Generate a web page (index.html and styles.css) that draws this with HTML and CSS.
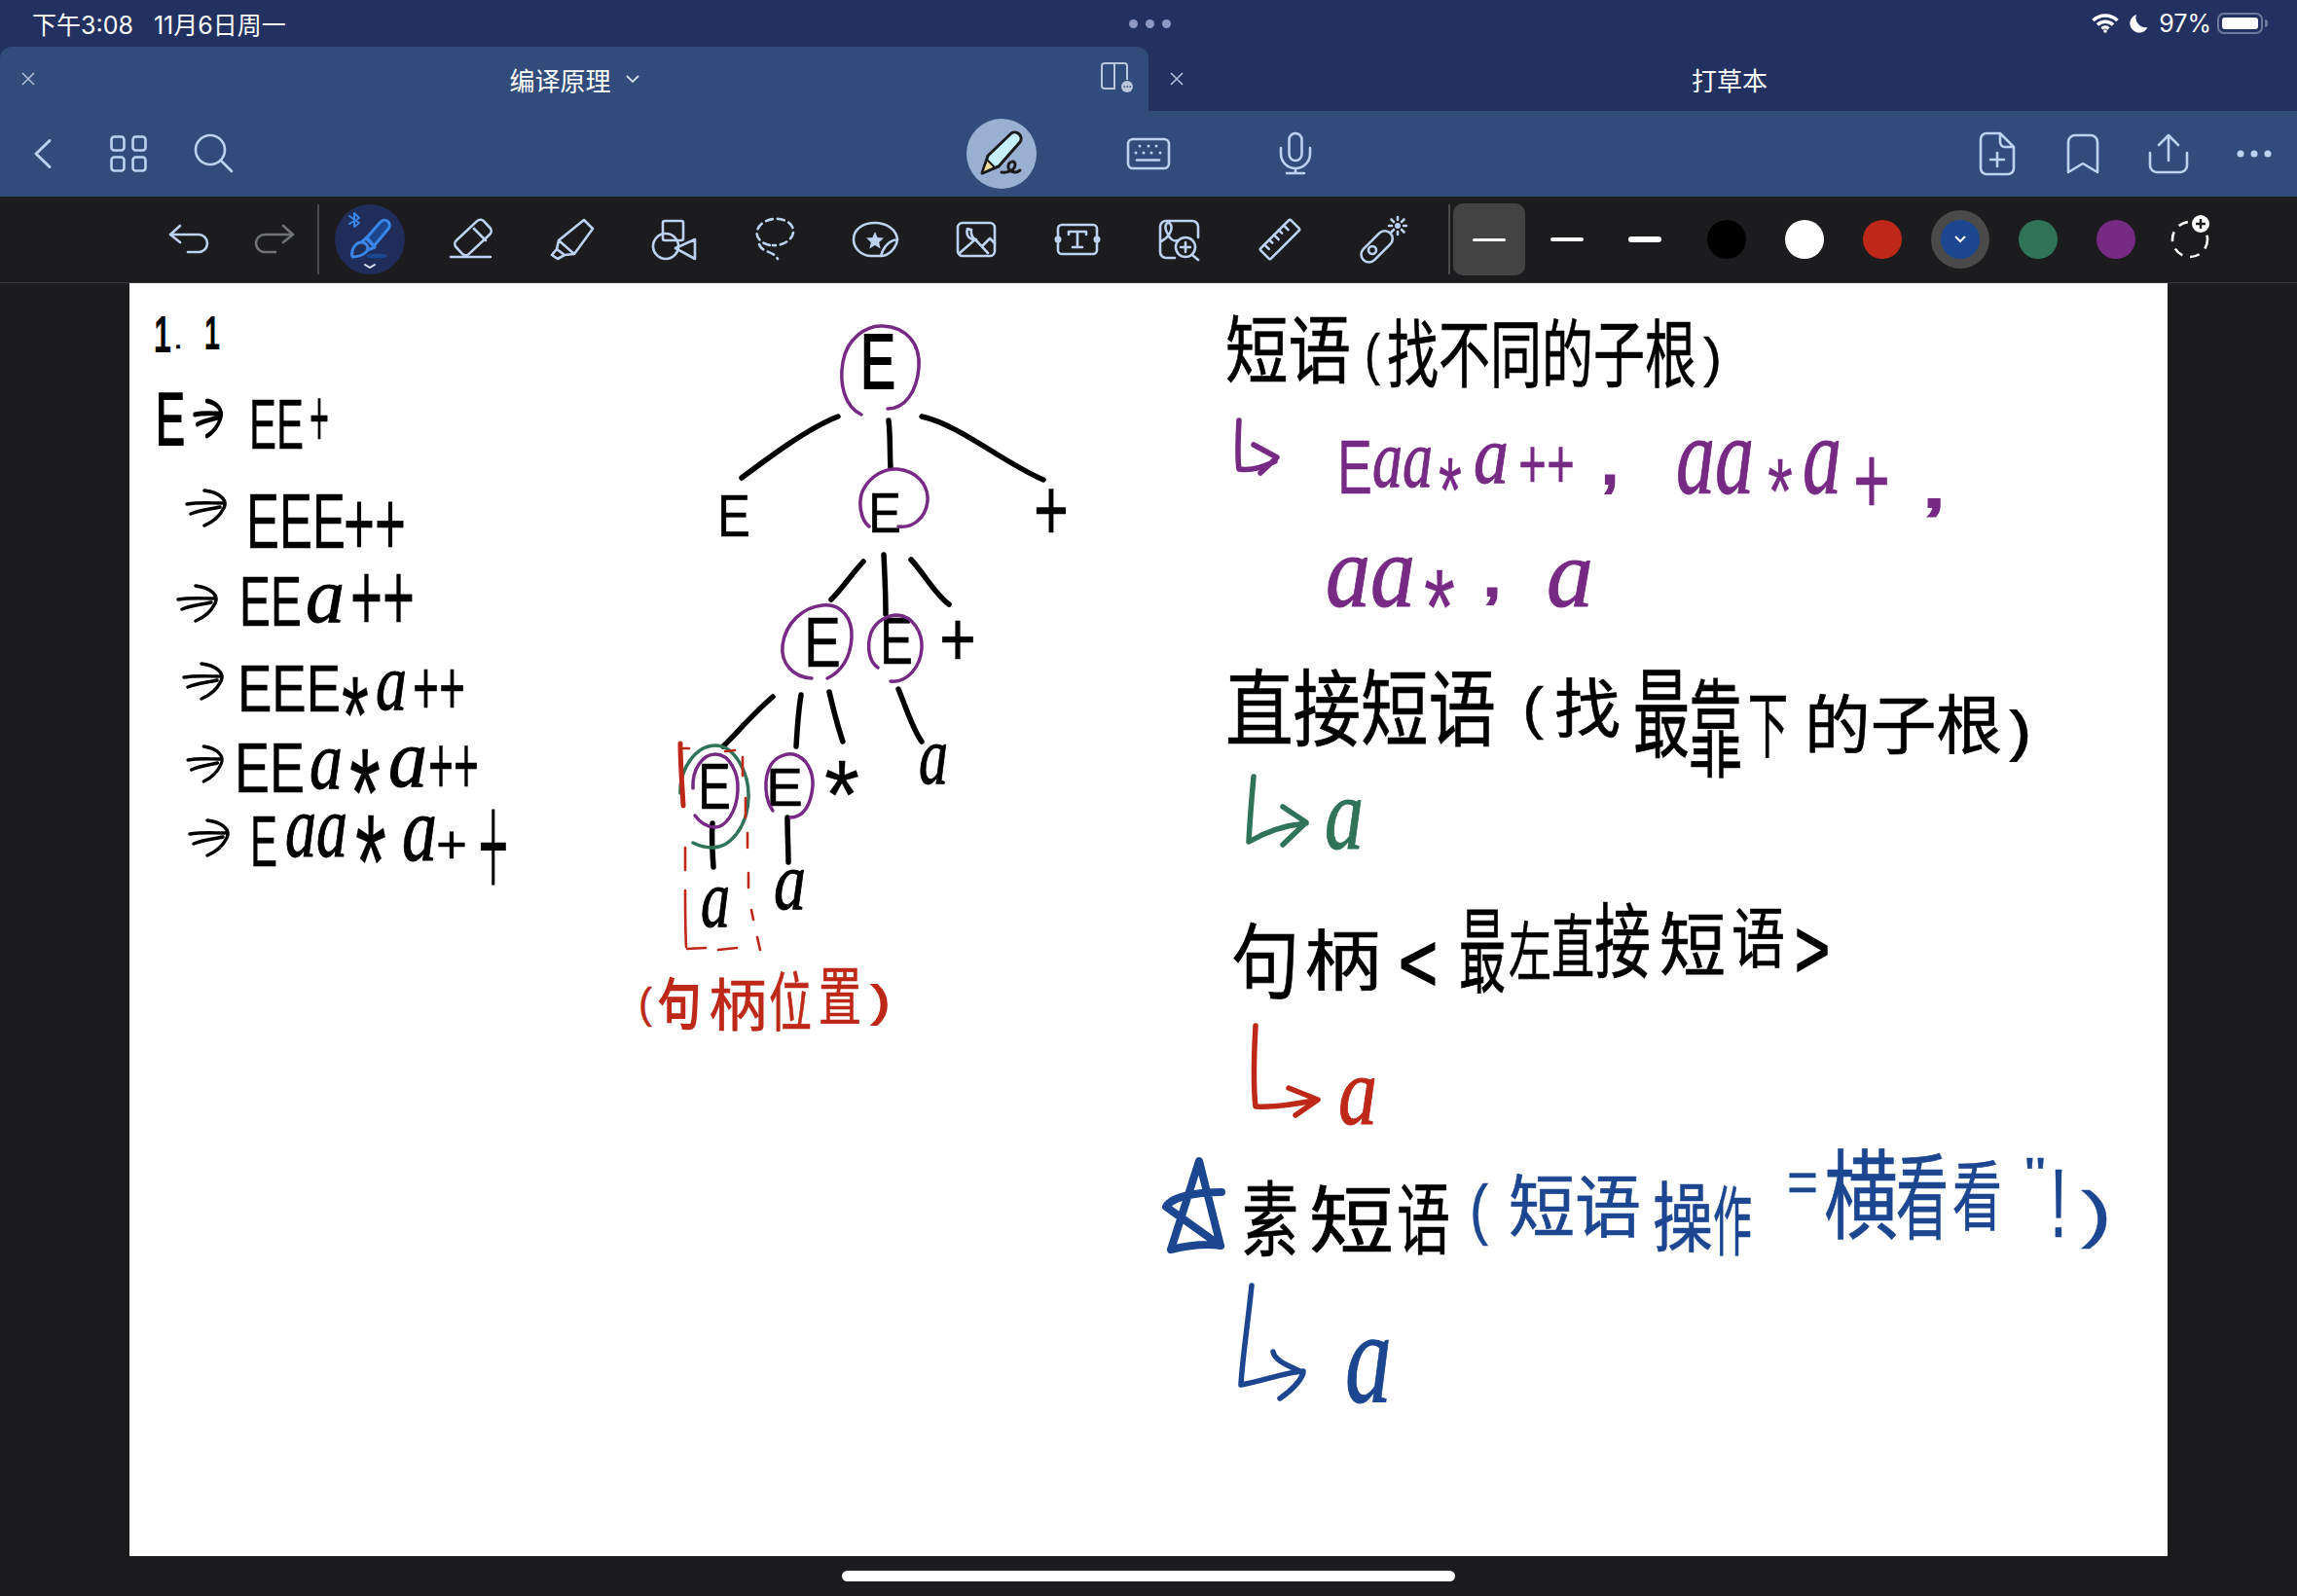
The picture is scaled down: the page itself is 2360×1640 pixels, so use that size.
FILE: index.html
```html
<!DOCTYPE html>
<html lang="zh-CN">
<head>
    <title>编译原理</title>
    <link rel="stylesheet" href="styles.css">
</head>
<body>
    <!-- status bar -->
    <div class="status">
        <div class="status-time"><span>下午3:08</span><span>11月6日周一</span></div>
        <div class="status-dots"><i></i><i></i><i></i></div>
        <div class="status-right">
            <svg class="wifi" viewBox="0 0 28 20"><path d="M1.5 7A18 18 0 0 1 26.500 7M6 11.500A11.500 11.500 0 0 1 22 11.500M10.500 15.500A5 5 0 0 1 17.500 15.500"/><circle cx="14" cy="18" r="1.800"/></svg>
            <svg class="moon" viewBox="0 0 20 20"><path d="M8 1A9.500 9.500 0 1 0 19.500 14A10 10 0 0 1 8 1Z"/></svg>
            <span class="battery-text">97%</span>
            <div class="battery"><div class="battery-fill"></div></div>
            <div class="battery-nub"></div>
        </div>
    </div>

    <!-- tabs -->
    <div class="tabs">
        <div class="tab active">
            <div class="tab-side"><svg class="tab-close" viewBox="0 0 14 14"><path d="M1 1L13 13M13 1L1 13"/></svg></div>
            <div class="tab-title">编译原理<svg class="tab-chevron" viewBox="0 0 14 8"><path d="M1 1L7 7L13 1"/></svg></div>
            <div class="tab-side">
                <svg class="split" viewBox="0 0 36 34"><path d="M16 27H5a3 3 0 0 1-3-3V4a3 3 0 0 1 3-3H25a3 3 0 0 1 3 3V18M15 1V27"/><circle class="split-badge" cx="28" cy="25" r="6"/><path class="split-dots" d="M25 25H25.500M28 25H28.500M31 25H31.500"/></svg>
            </div>
        </div>
        <div class="tab">
            <div class="tab-side"><svg class="tab-close" viewBox="0 0 14 14"><path d="M1 1L13 13M13 1L1 13"/></svg></div>
            <div class="tab-title second">打草本</div>
            <div class="tab-side"></div>
        </div>
    </div>

    <!-- navigation icons -->
    <div class="nav">
        <div class="nav-group">
            <div class="cell"><svg class="icon thick" viewBox="0 0 48 48"><path d="M31 10.500L17 24L31 37.500"/></svg></div>
            <div class="cell"><svg class="icon" viewBox="0 0 48 48"><rect x="6.500" y="6.500" width="13" height="14" rx="3"/><rect x="28.500" y="6.500" width="13" height="14" rx="3"/><rect x="6.500" y="27.500" width="13" height="14" rx="3"/><rect x="28.500" y="27.500" width="13" height="14" rx="3"/></svg></div>
            <div class="cell"><svg class="icon" viewBox="0 0 48 48"><circle cx="20" cy="20" r="15"/><path d="M31 31L42 42"/></svg></div>
        </div>
        <div class="nav-group center">
            <div class="cell wide">
                <div class="pencil-btn">
                    <svg class="pencil" viewBox="0 0 72 72">
                        <path class="pencil-body" d="M16 56L22 38L46 15a6.500 6.500 0 0 1 9 9L33 49Z"/>
                        <path class="pencil-tip" d="M16 56L21 42L29 50Z"/>
                        <path class="pencil-line" d="M36 55C44 56 50 52 50 47C50 43 44 43 43 48C42 54 50 57 55 53"/>
                    </svg>
                </div>
            </div>
            <div class="cell wide"><svg class="icon" viewBox="0 0 48 48"><rect x="3" y="9" width="42" height="30" rx="5"/><path d="M12 30.500H35"/><g class="icon-dots"><circle cx="15" cy="16" r="1.500"/><circle cx="24" cy="16" r="1.500"/><circle cx="32" cy="16" r="1.500"/><circle cx="11" cy="23" r="1.500"/><circle cx="19" cy="23" r="1.500"/><circle cx="27" cy="23" r="1.500"/><circle cx="36" cy="23" r="1.500"/></g></svg></div>
            <div class="cell wide"><svg class="icon" viewBox="0 0 48 48"><rect x="17.500" y="3" width="13" height="28" rx="6.500"/><path d="M9 18V24a15 15 0 0 0 30 0V18M24 39V44M15 44H33"/></svg></div>
        </div>
        <div class="nav-group right">
            <div class="cell"><svg class="icon" viewBox="0 0 48 48"><path d="M27 3H13a6 6 0 0 0-6 6V39a6 6 0 0 0 6 6H35a6 6 0 0 0 6-6V17ZM27 3V12a5 5 0 0 0 5 5H41M24 23V37M17 30H31"/></svg></div>
            <div class="cell"><svg class="icon" viewBox="0 0 48 48"><path d="M9 43V12a7 7 0 0 1 7-7H32a7 7 0 0 1 7 7V43L24 34Z"/></svg></div>
            <div class="cell"><svg class="icon" viewBox="0 0 48 48"><path d="M24 5V31M14 15L24 5L34 15M5 23V36a7 7 0 0 0 7 7H36a7 7 0 0 0 7-7V23"/></svg></div>
            <div class="cell"><svg class="icon" viewBox="0 0 48 48"><g class="icon-dots"><circle cx="10" cy="24" r="3.500"/><circle cx="24" cy="24" r="3.500"/><circle cx="38" cy="24" r="3.500"/></g></svg></div>
        </div>
    </div>

    <!-- drawing tools -->
    <div class="tools">
        <div class="tool-edit"><svg class="icon" viewBox="0 0 48 48"><path d="M15 10L5 19L15 27M5 19H34a9 9 0 0 1 0 18H23"/></svg></div>
        <div class="tool-edit dim"><svg class="icon" viewBox="0 0 48 48"><path d="M33 10L43 19L33 27M43 19H14a9 9 0 0 0 0 18H25"/></svg></div>
        <div class="divider"></div>

        <div class="tool">
            <div class="pen-btn">
                <svg class="pen" viewBox="0 0 72 72">
                    <path class="pen-handle" d="M32 35L47 18a5 5 0 0 1 8 7L40 43Z"/>
                    <path class="pen-outline" d="M27 39L33 34L41 44L34 47M18 54C16 46 22 39 27 39C33 39 36 45 32 49C28 53 23 54 18 54Z"/>
                    <path class="pen-outline thin" d="M15 12L25 19L20 23V9L25 14L15 20"/>
                    <ellipse class="pen-blob" cx="43" cy="53" rx="11" ry="2.500"/>
                    <path class="pen-chevron" d="M31 62L36 65L41 62"/>
                </svg>
            </div>
        </div>
        <div class="tool"><svg class="icon" viewBox="0 0 48 48"><rect x="6.500" y="12.500" width="39" height="19" rx="5" transform="rotate(-43 26 22)"/><path d="M27 13L39 25M3 42H44"/></svg></div>
        <div class="tool"><svg class="icon" viewBox="0 0 48 48"><path d="M36 4L45 13L26 39L10 25ZM10 25L8 34L3 40L9 44L16 40L26 39M8 34L16 40"/></svg></div>
        <div class="tool"><svg class="icon" viewBox="0 0 48 48"><rect x="13" y="5" width="21" height="20" rx="2"/><circle cx="16" cy="31" r="13"/><path d="M46 24V44L26 33Z"/></svg></div>
        <div class="tool"><svg class="icon dashed" viewBox="0 0 48 48"><path d="M19 30C10 28 4 22 6 15C8 7 18 2 28 3C38 4 44 10 43 17C42 24 33 31 22 30"/><path d="M8 29C11 38 22 35 27 44"/></svg></div>
        <div class="tool"><svg class="icon" viewBox="0 0 48 48"><path d="M30 41H20C10 41 2 33 2 24C2 14 11 7 24 7C36 7 46 14 47 24C38 25 32 33 30 41C38 41 46 33 47 24"/><polygon class="icon-solid" points="24,16 26.600,22 33,22.600 28.200,27 29.600,33.500 24,30 18.400,33.500 19.800,27 15,22.600 21.400,22"/></svg></div>
        <div class="tool"><svg class="icon" viewBox="0 0 48 48"><rect x="5" y="7" width="38" height="34" rx="5"/><path d="M7 38L23 24L36 38M30 31L38 23L43 28M15 13C13 20 17 25 24 24C21 24 18 19 19 14Z"/></svg></div>
        <div class="tool"><svg class="icon" viewBox="0 0 48 48"><rect x="4" y="9" width="40" height="30" rx="4"/><path d="M15 19V16H33V19M24 16V32M19 32H29"/><g class="icon-solid"><circle cx="4" cy="24" r="3.500"/><circle cx="44" cy="24" r="3.500"/></g></svg></div>
        <div class="tool"><svg class="icon" viewBox="0 0 48 48"><path d="M20 43H11a6 6 0 0 1-6-6V11a6 6 0 0 1 6-6H38a6 6 0 0 1 6 6V22M6 26C14 22 18 14 16 9C13 4 8 9 12 17C14 22 18 27 23 25"/><circle cx="31" cy="32" r="10"/><path d="M38 40L44 45M31 27V37M26 32H36"/></svg></div>
        <div class="tool"><svg class="icon" viewBox="0 0 48 48"><g transform="rotate(-45 24 24)"><rect x="2" y="16.500" width="44" height="15" rx="2"/><path d="M9 16.500V23M16 16.500V21M23 16.500V23M30 16.500V21M37 16.500V23"/></g></svg></div>
        <div class="tool"><svg class="icon" viewBox="0 0 48 48"><rect x="0" y="23" width="39" height="16" rx="8" transform="rotate(-45 20 31)"/><circle cx="15" cy="35" r="4"/><circle class="icon-solid" cx="41" cy="10" r="3"/><path d="M41 1V4M41 16V19M32 10H35M47 10H50M34.500 3.500L37 6M45 14L47.500 16.500M34.500 16.500L37 14M45 6L47.500 3.500"/></svg></div>

        <div class="divider second"></div>
        <div class="swatch"><div class="size-tile"><div class="size-line s1"></div></div></div>
        <div class="swatch"><div class="size-line s2"></div></div>
        <div class="swatch"><div class="size-line s3"></div></div>
        <div class="swatch first-color"><div class="dot black"></div></div>
        <div class="swatch"><div class="dot white"></div></div>
        <div class="swatch"><div class="dot red"></div></div>
        <div class="swatch"><div class="dot blue"><svg class="dot-chevron" viewBox="0 0 12 8"><path d="M1 1L6 6L11 1"/></svg></div></div>
        <div class="swatch"><div class="dot green"></div></div>
        <div class="swatch"><div class="dot purple"></div></div>
        <div class="add-color">
            <svg class="add-icon" viewBox="0 0 48 48">
                <circle class="add-ring" cx="24" cy="24" r="18"/>
                <circle class="add-badge" cx="35" cy="8" r="9"/>
                <path class="add-plus" d="M35 3V13M30 8H40"/>
            </svg>
        </div>
    </div>

    <!-- the page with the notes -->
    <div class="workspace">
        <svg class="notes" viewBox="133 291 2094 1308">
            <defs>
                <path id="arrow" d="M0 14C12 12 24 13 36 13M4 24C14 20 26 19 34 17M18 0C34 2 42 10 38 18C34 26 28 32 18 36"/>
            </defs>

            <!-- derivation -->
            <g class="ink-black">
                <text class="cap bold" x="158" y="361" font-size="50" textLength="18" lengthAdjust="spacingAndGlyphs">1</text>
                <text class="cap" x="178" y="358" font-size="30" textLength="10" lengthAdjust="spacingAndGlyphs">.</text>
                <text class="cap bold" x="210" y="358" font-size="46" textLength="16" lengthAdjust="spacingAndGlyphs">1</text>

                <text class="cap bold" x="160" y="457" font-size="76" textLength="30" lengthAdjust="spacingAndGlyphs">E</text>
                <use class="stroke thick" href="#arrow" transform="translate(200 412) scale(.7 1)"/>
                <text class="cap" x="256" y="461" font-size="72" textLength="56" lengthAdjust="spacingAndGlyphs">EE</text>
                <text class="cap" x="318" y="459" font-size="85" textLength="20" lengthAdjust="spacingAndGlyphs">+</text>

                <use class="stroke" href="#arrow" transform="translate(192 504)"/>
                <text class="cap" x="253" y="563" font-size="80" textLength="102" lengthAdjust="spacingAndGlyphs">EEE</text>
                <text class="cap" x="353" y="570" font-size="95" textLength="64" lengthAdjust="spacingAndGlyphs">++</text>

                <use class="stroke" href="#arrow" transform="translate(183 602)"/>
                <text class="cap" x="246" y="643" font-size="72" textLength="64" lengthAdjust="spacingAndGlyphs">EE</text>
                <text class="hand" x="314" y="639" font-size="80" textLength="40" lengthAdjust="spacingAndGlyphs">a</text>
                <text class="cap" x="360" y="648" font-size="100" textLength="66" lengthAdjust="spacingAndGlyphs">++</text>

                <use class="stroke" href="#arrow" transform="translate(189 682)"/>
                <text class="cap" x="244" y="731" font-size="68" textLength="106" lengthAdjust="spacingAndGlyphs">EEE</text>
                <text class="cap" x="351" y="774" font-size="114" textLength="28" lengthAdjust="spacingAndGlyphs">*</text>
                <text class="hand" x="386" y="729" font-size="82" textLength="32" lengthAdjust="spacingAndGlyphs">a</text>
                <text class="cap" x="424" y="734" font-size="80" textLength="54" lengthAdjust="spacingAndGlyphs">++</text>

                <use class="stroke" href="#arrow" transform="translate(193 767) scale(.9 1)"/>
                <text class="cap" x="241" y="814" font-size="72" textLength="72" lengthAdjust="spacingAndGlyphs">EE</text>
                <text class="hand" x="318" y="810" font-size="85" textLength="34" lengthAdjust="spacingAndGlyphs">a</text>
                <text class="cap" x="359" y="860" font-size="130" textLength="32" lengthAdjust="spacingAndGlyphs">*</text>
                <text class="hand" x="399" y="808" font-size="85" textLength="40" lengthAdjust="spacingAndGlyphs">a</text>
                <text class="cap" x="440" y="816" font-size="85" textLength="52" lengthAdjust="spacingAndGlyphs">++</text>

                <use class="stroke" href="#arrow" transform="translate(195 843)"/>
                <text class="cap" x="257" y="890" font-size="74" textLength="28" lengthAdjust="spacingAndGlyphs">E</text>
                <text class="hand" x="293" y="880" font-size="90" textLength="64" lengthAdjust="spacingAndGlyphs">aa</text>
                <text class="cap" x="365" y="934" font-size="140" textLength="32" lengthAdjust="spacingAndGlyphs">*</text>
                <text class="hand" x="413" y="884" font-size="95" textLength="36" lengthAdjust="spacingAndGlyphs">a</text>
                <text class="cap" x="448" y="887" font-size="55" textLength="32" lengthAdjust="spacingAndGlyphs">+</text>
                <text class="light" x="492" y="920" font-size="150" textLength="30" lengthAdjust="spacingAndGlyphs">+</text>
            </g>

            <!-- parse tree -->
            <g class="stroke ink-black wide">
                <path d="M861 428C830 440 790 470 762 491"/>
                <path d="M913 432C915 450 914 465 915 481"/>
                <path d="M947 428C985 436 1030 475 1072 493"/>
                <path d="M887 577C875 590 865 605 854 616"/>
                <path d="M908 570C909 590 910 610 910 631"/>
                <path d="M936 575C950 590 960 610 975 621"/>
                <path d="M794 716C775 732 760 750 743 767"/>
                <path d="M823 714C820 732 819 750 818 767"/>
                <path d="M852 711C856 728 860 745 866 762"/>
                <path d="M923 708C930 725 938 750 947 762"/>
                <path d="M732 846C731 860 732 878 733 891"/>
                <path d="M809 840C809 858 810 872 810 886"/>
            </g>
            <g class="ink-black">
                <text class="cap bold" x="884" y="399" font-size="80" textLength="36" lengthAdjust="spacingAndGlyphs">E</text>
                <text class="cap" x="737" y="551" font-size="62" textLength="34" lengthAdjust="spacingAndGlyphs">E</text>
                <text class="cap" x="892" y="547" font-size="58" textLength="34" lengthAdjust="spacingAndGlyphs">E</text>
                <text class="cap" x="1062" y="555" font-size="90" textLength="36" lengthAdjust="spacingAndGlyphs">+</text>
                <text class="cap" x="826" y="685" font-size="72" textLength="38" lengthAdjust="spacingAndGlyphs">E</text>
                <text class="cap" x="904" y="682" font-size="68" textLength="34" lengthAdjust="spacingAndGlyphs">E</text>
                <text class="cap" x="965" y="684" font-size="80" textLength="38" lengthAdjust="spacingAndGlyphs">+</text>
                <text class="cap" x="717" y="831" font-size="66" textLength="34" lengthAdjust="spacingAndGlyphs">E</text>
                <text class="cap" x="787" y="828" font-size="56" textLength="38" lengthAdjust="spacingAndGlyphs">E</text>
                <text class="cap" x="847" y="851" font-size="100" textLength="36" lengthAdjust="spacingAndGlyphs">*</text>
                <text class="hand" x="944" y="805" font-size="85" textLength="30" lengthAdjust="spacingAndGlyphs">a</text>
                <text class="hand" x="720" y="952" font-size="85" textLength="30" lengthAdjust="spacingAndGlyphs">a</text>
                <text class="hand" x="795" y="934" font-size="85" textLength="33" lengthAdjust="spacingAndGlyphs">a</text>
            </g>
            <g class="stroke ink-purple">
                <path d="M885 426C868 418 862 395 866 372C870 348 890 334 907 335C930 336 946 352 944 378C942 402 930 420 912 420"/>
                <path d="M893 541C884 534 881 515 887 503C895 488 910 481 922 482C942 484 954 498 953 515C951 533 937 543 923 541"/>
                <path d="M834 697C815 696 802 682 804 663C807 640 825 624 845 622C865 620 876 636 875 655C874 675 865 690 850 697"/>
                <path d="M902 686C893 680 890 665 895 650C900 638 912 632 922 632C938 633 948 650 947 666C946 685 932 702 915 700"/>
                <path d="M712 810C711 790 722 775 735 775C750 775 759 795 758 812C757 835 745 850 735 850C727 850 719 845 714 838"/>
                <path d="M794 833C786 822 784 800 792 786C798 777 808 774 815 775C828 778 836 792 835 808C833 828 825 840 812 840"/>
            </g>
            <path class="stroke ink-green" d="M699 815C698 790 715 766 735 766C755 766 770 795 769 820C768 850 750 871 732 871C722 871 716 868 712 866"/>
            <g class="stroke ink-red dash">
                <path class="thick" d="M699 764C699 785 701 808 702 828"/>
                <path d="M704 871V894M704 915C704 935 704 955 705 973M706 975L725 974M738 976L757 974"/>
                <path d="M702 769H708M745 772L755 771M763 778V797M766 820V840M768 856V871M769 897V912M772 935L774 945M778 963L781 976"/>
            </g>
            <g class="ink-red">
                <text class="cap" x="656" y="1046" font-size="44" textLength="14" lengthAdjust="spacingAndGlyphs">(</text>
                <text class="zh bold" x="676" y="1052" font-size="56" textLength="44" lengthAdjust="spacingAndGlyphs">句</text>
                <text class="zh" x="728" y="1054" font-size="58" textLength="60" lengthAdjust="spacingAndGlyphs">柄</text>
                <text class="zh" x="790" y="1054" font-size="66" textLength="44" lengthAdjust="spacingAndGlyphs">位</text>
                <text class="zh" x="841" y="1048" font-size="66" textLength="44" lengthAdjust="spacingAndGlyphs">置</text>
                <text class="cap bold" x="896" y="1044" font-size="44" textLength="18" lengthAdjust="spacingAndGlyphs">)</text>
            </g>

            <!-- 短语 -->
            <g class="ink-black">
                <text class="zh" x="1259" y="388" font-size="76" textLength="129" lengthAdjust="spacingAndGlyphs">短语</text>
                <text class="cap" x="1402" y="384" font-size="58" textLength="16" lengthAdjust="spacingAndGlyphs">(</text>
                <text class="zh" x="1425" y="392" font-size="76" textLength="318" lengthAdjust="spacingAndGlyphs">找不同的子根</text>
                <text class="cap" x="1750" y="386" font-size="56" textLength="19" lengthAdjust="spacingAndGlyphs">)</text>
            </g>
            <g class="ink-purple">
                <path class="stroke wide" d="M1273 432C1272 450 1271 470 1273 482C1285 484 1298 480 1310 474M1288 457L1312 470L1295 486"/>
                <text class="cap" x="1374" y="507" font-size="78" textLength="36" lengthAdjust="spacingAndGlyphs">E</text>
                <text class="hand" x="1410" y="500" font-size="85" textLength="62" lengthAdjust="spacingAndGlyphs">aa</text>
                <text class="cap" x="1478" y="536" font-size="95" textLength="24" lengthAdjust="spacingAndGlyphs">*</text>
                <text class="hand" x="1514" y="496" font-size="85" textLength="36" lengthAdjust="spacingAndGlyphs">a</text>
                <text class="cap" x="1560" y="501" font-size="72" textLength="58" lengthAdjust="spacingAndGlyphs">++</text>
                <text class="cap bold" x="1642" y="497" font-size="80" textLength="24" lengthAdjust="spacingAndGlyphs">,</text>
                <text class="hand" x="1722" y="507" font-size="115" textLength="80" lengthAdjust="spacingAndGlyphs">aa</text>
                <text class="cap" x="1816" y="537" font-size="95" textLength="26" lengthAdjust="spacingAndGlyphs">*</text>
                <text class="hand" x="1852" y="507" font-size="115" textLength="40" lengthAdjust="spacingAndGlyphs">a</text>
                <text class="cap" x="1904" y="528" font-size="100" textLength="38" lengthAdjust="spacingAndGlyphs">+</text>
                <text class="cap bold" x="1972" y="521" font-size="75" textLength="30" lengthAdjust="spacingAndGlyphs">,</text>
                <text class="hand" x="1362" y="623" font-size="105" textLength="92" lengthAdjust="spacingAndGlyphs">aa</text>
                <text class="cap" x="1463" y="661" font-size="110" textLength="32" lengthAdjust="spacingAndGlyphs">*</text>
                <text class="cap bold" x="1521" y="612" font-size="70" textLength="24" lengthAdjust="spacingAndGlyphs">,</text>
                <text class="hand" x="1589" y="623" font-size="100" textLength="48" lengthAdjust="spacingAndGlyphs">a</text>
            </g>

            <!-- 直接短语 -->
            <g class="ink-black">
                <text class="zh" x="1259" y="760" font-size="86" textLength="278" lengthAdjust="spacingAndGlyphs">直接短语</text>
                <text class="cap" x="1564" y="748" font-size="60" textLength="22" lengthAdjust="spacingAndGlyphs">(</text>
                <text class="zh" x="1597" y="752" font-size="66" textLength="68" lengthAdjust="spacingAndGlyphs">找</text>
                <text class="zh" x="1678" y="770" font-size="100" textLength="58" lengthAdjust="spacingAndGlyphs">最</text>
                <text class="zh" x="1735" y="790" font-size="110" textLength="55" lengthAdjust="spacingAndGlyphs">靠</text>
                <text class="zh" x="1796" y="772" font-size="74" textLength="41" lengthAdjust="spacingAndGlyphs">下</text>
                <text class="zh" x="1854" y="769" font-size="66" textLength="203" lengthAdjust="spacingAndGlyphs">的子根</text>
                <text class="cap bold" x="2066" y="770" font-size="56" textLength="20" lengthAdjust="spacingAndGlyphs">)</text>
            </g>
            <g class="ink-green">
                <path class="stroke wide" d="M1288 798C1286 820 1284 845 1283 865C1300 855 1320 848 1342 846M1318 829L1342 845L1318 868"/>
                <text class="hand" x="1361" y="872" font-size="105" textLength="40" lengthAdjust="spacingAndGlyphs">a</text>
            </g>

            <!-- 句柄 -->
            <g class="ink-black">
                <text class="zh" x="1265" y="1019" font-size="84" textLength="70" lengthAdjust="spacingAndGlyphs">句</text>
                <text class="zh" x="1340" y="1012" font-size="68" textLength="79" lengthAdjust="spacingAndGlyphs">柄</text>
                <text class="cap bold" x="1437" y="1018" font-size="84" textLength="40" lengthAdjust="spacingAndGlyphs">&lt;</text>
                <text class="zh" x="1499" y="1012" font-size="96" textLength="48" lengthAdjust="spacingAndGlyphs">最</text>
                <text class="zh" x="1550" y="1002" font-size="66" textLength="44" lengthAdjust="spacingAndGlyphs">左</text>
                <text class="zh" x="1594" y="999" font-size="72" textLength="44" lengthAdjust="spacingAndGlyphs">直</text>
                <text class="zh" x="1638" y="998" font-size="84" textLength="58" lengthAdjust="spacingAndGlyphs">接</text>
                <text class="zh" x="1705" y="997" font-size="72" textLength="68" lengthAdjust="spacingAndGlyphs">短</text>
                <text class="zh" x="1779" y="989" font-size="68" textLength="55" lengthAdjust="spacingAndGlyphs">语</text>
                <text class="cap bold" x="1844" y="1004" font-size="84" textLength="36" lengthAdjust="spacingAndGlyphs">&gt;</text>
            </g>
            <g class="ink-red">
                <path class="stroke wide" d="M1290 1054C1288 1090 1288 1120 1290 1137C1310 1138 1335 1134 1354 1130M1324 1118L1354 1130L1331 1146"/>
                <text class="hand" x="1375" y="1155" font-size="100" textLength="40" lengthAdjust="spacingAndGlyphs">a</text>
            </g>

            <!-- 素短语 -->
            <path class="stroke ink-blue star" d="M1203 1284L1232 1193L1254 1280L1198 1240C1205 1228 1235 1225 1255 1225M1203 1284C1220 1280 1240 1278 1254 1280"/>
            <g class="ink-black">
                <text class="zh" x="1276" y="1284" font-size="84" textLength="58" lengthAdjust="spacingAndGlyphs">素</text>
                <text class="zh" x="1345" y="1282" font-size="76" textLength="87" lengthAdjust="spacingAndGlyphs">短</text>
                <text class="zh" x="1435" y="1282" font-size="80" textLength="55" lengthAdjust="spacingAndGlyphs">语</text>
            </g>
            <g class="ink-blue">
                <text class="cap" x="1510" y="1266" font-size="68" textLength="19" lengthAdjust="spacingAndGlyphs">(</text>
                <text class="zh" x="1550" y="1266" font-size="70" textLength="136" lengthAdjust="spacingAndGlyphs">短语</text>
                <text class="zh" x="1698" y="1280" font-size="78" textLength="62" lengthAdjust="spacingAndGlyphs">操</text>
                <text class="zh" x="1760" y="1284" font-size="78" textLength="40" lengthAdjust="spacingAndGlyphs">作</text>
                <text class="cap" x="1836" y="1235" font-size="60" textLength="32" lengthAdjust="spacingAndGlyphs">=</text>
                <text class="zh" x="1874" y="1265" font-size="100" textLength="76" lengthAdjust="spacingAndGlyphs">横</text>
                <text class="zh" x="1948" y="1265" font-size="96" textLength="54" lengthAdjust="spacingAndGlyphs">看</text>
                <text class="zh" x="2006" y="1258" font-size="78" textLength="51" lengthAdjust="spacingAndGlyphs">看</text>
                <text class="cap" x="2080" y="1225" font-size="50" textLength="22" lengthAdjust="spacingAndGlyphs">"</text>
                <text class="cap" x="2106" y="1271" font-size="100" textLength="18" lengthAdjust="spacingAndGlyphs">!</text>
                <text class="cap" x="2138" y="1270" font-size="64" textLength="32" lengthAdjust="spacingAndGlyphs">)</text>
                <path class="stroke wide" d="M1286 1321C1282 1360 1276 1400 1275 1423C1295 1420 1320 1410 1339 1409M1308 1389C1310 1400 1330 1405 1339 1411C1335 1422 1325 1430 1315 1437"/>
                <text class="hand" x="1382" y="1441" font-size="135" textLength="48" lengthAdjust="spacingAndGlyphs">a</text>
            </g>
        </svg>
    </div>

    <div class="footer"><div class="home-bar"></div></div>
</body>
</html>
```
FILE: styles.css
```css
/* Set body font and background color */
body {
    margin: 0;
    width: 2360px;
    height: 1640px;
    overflow: hidden;
    display: flex;
    flex-direction: column;
    background-color: #1c1b1d;
    font-family: Inter, "Noto Sans CJK SC", sans-serif;
}

/* Set status bar styles */
.status {
    height: 48px;
    flex: none;
    display: grid;
    grid-template-columns: 1fr auto 1fr;
    align-items: center;
    padding: 0 30px 0 33px;
    background-color: #233160;
    color: #fff;
    font-size: 25px;
}

.status-time {
    display: flex;
    gap: 21px;
}

.status-dots {
    display: flex;
    gap: 8px;
}

    .status-dots i {
        width: 9px;
        height: 9px;
        border-radius: 50%;
        background-color: #8e99c3;
    }

.status-right {
    display: flex;
    align-items: center;
    justify-content: flex-end;
}

.wifi {
    width: 28px;
    height: 20px;
    fill: #fff;
    stroke: #fff;
    stroke-width: 3.4;
}

    .wifi path {
        fill: none;
    }

    .wifi circle {
        stroke: none;
    }

.moon {
    width: 20px;
    height: 20px;
    margin-left: 10px;
    fill: #fff;
}

.battery-text {
    margin-left: 11px;
}

.battery {
    width: 47px;
    height: 22px;
    margin-left: 6px;
    padding: 3px;
    box-sizing: border-box;
    border: 2px solid #6e7a9c;
    border-radius: 7px;
}

.battery-fill {
    height: 100%;
    border-radius: 3px;
    background-color: #fff;
}

.battery-nub {
    width: 3px;
    height: 8px;
    margin-left: 2px;
    border-radius: 0 3px 3px 0;
    background-color: #6e7a9c;
}

/* Set tab styles */
.tabs {
    height: 66px;
    flex: none;
    display: flex;
    background-color: #233160;
}

.tab {
    width: 1180px;
    display: flex;
    align-items: center;
}

    .tab.active {
        border-radius: 12px 12px 0 0;
        background-color: #314c7b;
    }

.tab-side {
    width: 58px;
    display: flex;
    align-items: center;
    justify-content: center;
}

.tab-close {
    width: 14px;
    height: 14px;
    fill: none;
    stroke: #aebcd6;
    stroke-width: 1.6;
}

.tab-title {
    flex: 1;
    display: flex;
    align-items: center;
    justify-content: center;
    gap: 15px;
    color: #fff;
    font-size: 26px;
}

    .tab-title.second {
        padding-left: 14px;
    }

.tab-chevron {
    width: 14px;
    height: 8px;
    fill: none;
    stroke: #d4deee;
    stroke-width: 1.800;
}

.split {
    width: 36px;
    height: 34px;
    margin-right: 6px;
    fill: none;
    stroke: #b9c6dc;
    stroke-width: 2;
}

.split-badge {
    fill: #b9c6dc;
    stroke: none;
}

.split-dots {
    stroke: #314c7b;
    stroke-linecap: round;
    stroke-width: 1.600;
}

/* Set navigation bar styles */
.nav {
    height: 88px;
    flex: none;
    display: grid;
    grid-template-columns: 1fr auto 1fr;
    background-color: #314c7b;
    color: #bcd2f0;
}

.nav-group {
    display: flex;
    align-items: center;
}

    .nav-group.right {
        justify-content: flex-end;
    }

.cell {
    width: 88px;
    display: flex;
    align-items: center;
    justify-content: center;
}

    .cell.wide {
        width: 151px;
    }

/* Shared line icon */
.icon {
    width: 48px;
    height: 48px;
    overflow: visible;
    fill: none;
    stroke: currentColor;
    stroke-width: 2.600;
    stroke-linecap: round;
    stroke-linejoin: round;
}

    .icon.thick {
        stroke-width: 3;
    }

    .icon.dashed {
        stroke-dasharray: 7 5;
    }

.icon-dots,
.icon-solid {
    fill: currentColor;
    stroke: none;
}

.pencil-btn {
    width: 72px;
    height: 72px;
    border-radius: 50%;
    background-color: #9ab0d2;
}

.pencil {
    width: 72px;
    height: 72px;
    stroke: #1b1b1d;
    stroke-width: 3;
    stroke-linejoin: round;
    stroke-linecap: round;
}

.pencil-body {
    fill: #c6f0fd;
}

.pencil-tip {
    fill: #f0dc9e;
    stroke-width: 2;
}

.pencil-line {
    fill: none;
}

/* Set drawing toolbar styles */
.tools {
    height: 88px;
    flex: none;
    display: flex;
    align-items: center;
    padding-left: 150px;
    border-bottom: 1px solid #38383a;
    background-color: #1c1b1d;
    color: #bcd2f0;
}

.tool-edit {
    width: 88px;
    display: flex;
    justify-content: center;
}

    .tool-edit.dim {
        color: #707478;
    }

.divider {
    width: 2px;
    height: 72px;
    background-color: #4a4a4a;
}

    .divider.second {
        margin-left: 17px;
    }

.tool {
    width: 103.900px;
    display: flex;
    align-items: center;
    justify-content: center;
}

.pen-btn {
    width: 72px;
    height: 72px;
    border-radius: 50%;
    background-color: #202d5b;
}

.pen {
    width: 72px;
    height: 72px;
    fill: none;
    stroke-linecap: round;
    stroke-linejoin: round;
}

.pen-handle {
    fill: #1c4690;
    stroke: #3a86e8;
    stroke-width: 3;
}

.pen-outline {
    stroke: #3a86e8;
    stroke-width: 3;
}

    .pen-outline.thin {
        stroke-width: 2;
    }

.pen-blob {
    fill: #1c4690;
}

.pen-chevron {
    stroke: #dfe6f4;
    stroke-width: 2;
}

.swatch {
    width: 80px;
    display: flex;
    align-items: center;
    justify-content: center;
}

    .swatch.first-color {
        margin-left: 4px;
    }

.size-tile {
    width: 74px;
    height: 74px;
    display: flex;
    align-items: center;
    justify-content: center;
    border-radius: 10px;
    background-color: #434344;
}

.size-line {
    width: 34px;
    border-radius: 3px;
    background-color: #fff;
}

    .size-line.s1 {
        height: 3px;
    }

    .size-line.s2 {
        height: 4px;
    }

    .size-line.s3 {
        height: 6px;
    }

.dot {
    width: 40px;
    height: 40px;
    display: flex;
    align-items: center;
    justify-content: center;
    border-radius: 50%;
}

    .dot.black {
        background-color: #000;
    }

    .dot.white {
        background-color: #fff;
    }

    .dot.red {
        background-color: #bd2818;
    }

    .dot.blue {
        background-color: #1c4690;
        box-shadow: 0 0 0 10px #4a4a4a;
    }

    .dot.green {
        background-color: #2f7358;
    }

    .dot.purple {
        background-color: #762a84;
    }

.dot-chevron {
    width: 12px;
    height: 8px;
    fill: none;
    stroke: #fff;
    stroke-width: 2;
}

.add-color {
    margin-left: 12px;
    display: flex;
}

.add-icon {
    width: 48px;
    height: 48px;
    overflow: visible;
}

.add-ring {
    fill: none;
    stroke: #fff;
    stroke-width: 2.600;
    stroke-dasharray: 10 8;
}

.add-badge {
    fill: #fff;
}

.add-plus {
    fill: none;
    stroke: #1c1b1d;
    stroke-width: 2.400;
}

/* Set page styles */
.workspace {
    height: 1308px;
    flex: none;
    padding: 0 133px;
}

.notes {
    display: block;
    width: 2094px;
    height: 1308px;
    background-color: #fff;
}

    .notes text {
        fill: currentColor;
        stroke: currentColor;
    }

/* Ink colors */
.ink-black {
    color: #000;
}

.ink-purple {
    color: #762a84;
}

.ink-green {
    color: #2f7358;
}

.ink-red {
    color: #bd2818;
}

.ink-blue {
    color: #1c4690;
}

/* Handwriting: text runs on the note */
.cap {
    font-family: "Liberation Sans", sans-serif;
    stroke-width: 0.400px;
}

.light {
    font-family: Roboto, sans-serif;
    font-weight: 300;
    stroke-width: 0;
}

.hand {
    font-family: "Liberation Serif", serif;
    font-style: italic;
    stroke-width: 1px;
}

.zh {
    font-family: "Noto Sans CJK SC", sans-serif;
    stroke-width: 0.700px;
}

.notes .bold {
    stroke-width: 2px;
}

/* Handwriting: pen strokes on the note */
.stroke {
    fill: none;
    stroke: currentColor;
    stroke-width: 3.500;
    stroke-linecap: round;
    stroke-linejoin: round;
}

    .stroke.wide {
        stroke-width: 5.500;
    }

    .stroke.thick {
        stroke-width: 5;
    }

    .stroke.dash {
        stroke-width: 2.600;
    }

    .stroke.star {
        stroke-width: 8;
    }

.dash .thick {
    stroke-width: 5;
}

/* Home indicator */
.footer {
    flex: 1;
    display: flex;
    align-items: center;
    justify-content: center;
}

.home-bar {
    width: 630px;
    height: 11px;
    border-radius: 6px;
    background-color: #fff;
}
```
